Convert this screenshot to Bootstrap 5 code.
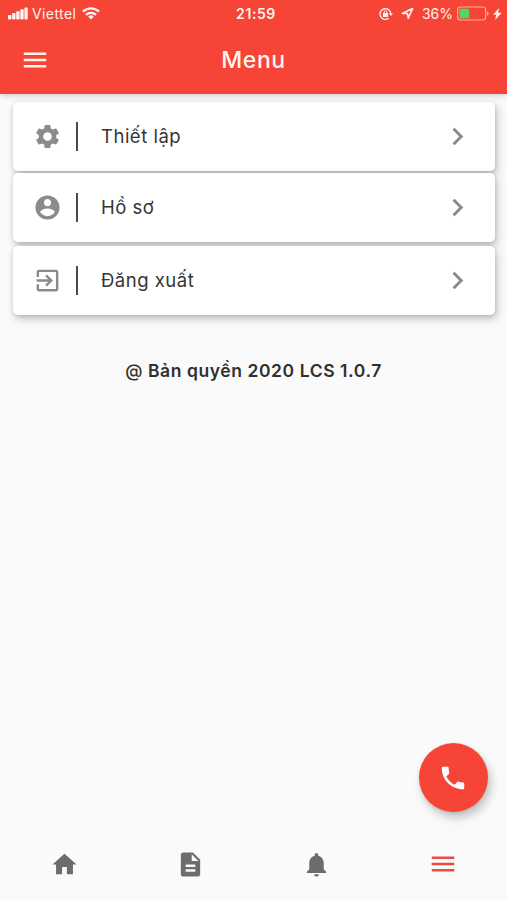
<!DOCTYPE html>
<html lang="vi">
<head>
<meta charset="utf-8">
<meta name="viewport" content="width=device-width, initial-scale=1">
<title>Menu</title>
<link href="https://cdn.jsdelivr.net/npm/bootstrap@5.3.0/dist/css/bootstrap.min.css" rel="stylesheet">
<style>
body{font-family:Inter,"Liberation Sans",sans-serif;background:#fafafa;color:#303030;height:900px;overflow:hidden}
svg{display:block;flex:none}
.app-header{background:#f64436;height:94px;box-shadow:0 1px 6px rgba(0,0,0,.22);color:#fff3f0;z-index:2}
.status{height:27px;font-size:14px;line-height:27px;padding:0 5px 0 8px}
.status>div{flex:1 1 0}
.carrier{letter-spacing:.4px;margin-left:4px;margin-right:6px}
.clock{font-weight:600;letter-spacing:.6px;padding-left:2px}
.toolbar{height:66px;padding:0 20px}
.toolbar>div{flex:1 1 0}
.title{font-size:23px;font-weight:500;letter-spacing:.6px;line-height:30px}
.menu-list{padding:8px 12px 0 13px}
.menu-item{height:69px;border-radius:5px;background:#fff;padding:0 20px 0 19.5px;box-shadow:2px 4px 8px rgba(0,0,0,.22),0 1px 4px rgba(0,0,0,.12);color:#353535;font-size:18.5px;letter-spacing:.5px;margin-bottom:2px}
.menu-item+.menu-item{margin-bottom:4px}
.menu-item svg{fill:#8b8b8b}
.menu-item .label{padding-top:1px}
.divider{width:1.5px;height:29px;background:#4a4a4a;margin:0 23.5px 0 14.5px}
.copyright{font-size:17.5px;font-weight:600;letter-spacing:.58px;margin-top:38.5px}
.copyright .at{font-weight:500}
.fab{width:69px;height:69px;background:#f64436;box-shadow:3px 6px 10px rgba(0,0,0,.22),0 1px 3px rgba(0,0,0,.1);margin:0 19.5px 17px 0}
.tabs{height:71px;background:#fafafa;box-shadow:0 0 4px rgba(0,0,0,.03);padding:0 0 1px 1px}
.tabs svg{fill:#6c6c6c}
.tabs .current svg{fill:#e84c40}
</style>
</head>
<body class="d-flex flex-column">
<header class="app-header position-relative flex-shrink-0">
  <div class="status d-flex align-items-center">
    <div class="d-flex align-items-center">
      <svg width="20" height="13" viewBox="0 0 20 13" fill="#fff3f0"><rect x="0" y="8" width="3.4" height="4.6" rx="1"/><rect x="4.1" y="6" width="3.4" height="6.6" rx="1"/><rect x="8.2" y="4.2" width="3.4" height="8.4" rx="1"/><rect x="12.3" y="2.2" width="3.4" height="10.4" rx="1"/><rect x="16.4" y="0.4" width="3.4" height="12.2" rx="1"/></svg>
      <span class="carrier">Viettel</span>
      <svg width="18" height="13" viewBox="0 0 18 13" fill="none" stroke="#fff3f0" stroke-width="2.3"><path d="M1 4.7a11.5 11.5 0 0 1 16 0M4 7.9a7.2 7.2 0 0 1 10 0"/><path d="M9 12.5 6.2 9.7a4 4 0 0 1 5.6 0z" fill="#fff3f0" stroke="none"/></svg>
    </div>
    <div class="clock text-center">21:59</div>
    <div class="d-flex align-items-center justify-content-end">
      <svg width="14" height="14" viewBox="0 0 14 14" fill="none" stroke="#fff3f0" stroke-width="1.3"><path d="M9.7 11.3A5.4 5.4 0 1 1 11.8 7"/><path d="M9.9 6.2h4l-2 2.8z" fill="#fff3f0" stroke="none"/><rect x="3.9" y="6" width="5.2" height="3.9" rx=".4" fill="#fff3f0" stroke="none"/><path d="M5.1 6.4V5a1.4 1.4 0 0 1 2.8 0v1.4" stroke-width="1"/></svg>
      <svg class="ms-2" width="13" height="13" viewBox="0 0 13 13" fill="none" stroke="#fff3f0" stroke-width="1.6" stroke-linejoin="round"><path d="M1.3 6.5 11.6 1.5 7.3 11.3 6.5 6.5z"/></svg>
      <span class="ms-2 me-1">36%</span>
      <svg width="32" height="15" viewBox="0 0 32 15"><rect x=".6" y="1" width="28" height="13" rx="3" fill="none" stroke="#ffaaa0" stroke-width="1.1"/><rect x="2.4" y="2.8" width="9.8" height="9.4" rx="1" fill="#4cd964"/><path d="M30 5.2q1.6.5 1.6 2.3T30 9.8z" fill="#ffaaa0"/></svg>
      <svg class="ms-1" width="9" height="12" viewBox="0 0 9 12" fill="#fff3f0"><path d="M6 0 .2 6.8h3L2.2 12 8.6 4.7H5.2z"/></svg>
    </div>
  </div>
  <div class="toolbar d-flex align-items-center">
    <div><svg width="30" height="30" viewBox="0 0 24 24" fill="#fff3f0"><path d="M3 18h18v-2H3v2zm0-5h18v-2H3v2zm0-7v2h18V6H3z"/></svg></div>
    <h1 class="title m-0 text-center">Menu</h1>
    <div></div>
  </div>
</header>

<main class="flex-grow-1 d-flex flex-column">
  <div class="menu-list">
    <div class="menu-item d-flex align-items-center">
      <svg width="29" height="29" viewBox="0 0 24 24"><path d="M19.14 12.94c.04-.3.06-.61.06-.94 0-.32-.02-.64-.07-.94l2.03-1.58a.49.49 0 0 0 .12-.61l-1.92-3.32a.488.488 0 0 0-.59-.22l-2.39.96c-.5-.38-1.03-.7-1.62-.94l-.36-2.54a.484.484 0 0 0-.48-.41h-3.84c-.24 0-.43.17-.47.41l-.36 2.54c-.59.24-1.13.57-1.62.94l-2.39-.96c-.22-.08-.47 0-.59.22L2.74 8.87c-.12.21-.08.47.12.61l2.03 1.58c-.05.3-.09.63-.09.94s.02.64.07.94l-2.03 1.58a.49.49 0 0 0-.12.61l1.92 3.32c.12.22.37.29.59.22l2.39-.96c.5.38 1.03.7 1.62.94l.36 2.54c.05.24.24.41.48.41h3.84c.24 0 .44-.17.47-.41l.36-2.54c.59-.24 1.13-.56 1.62-.94l2.39.96c.22.08.47 0 .59-.22l1.92-3.32c.12-.22.07-.47-.12-.61l-2.01-1.58zM12 15.6A3.6 3.6 0 1 1 12 8.4a3.6 3.6 0 0 1 0 7.2z"/></svg>
      <span class="divider"></span><span class="label">Thiết lập</span>
      <svg class="ms-auto" width="35" height="35" viewBox="0 0 24 24"><path d="M10 6 8.59 7.41 13.17 12l-4.58 4.59L10 18l6-6z"/></svg>
    </div>
    <div class="menu-item d-flex align-items-center">
      <svg width="29" height="29" viewBox="0 0 24 24"><path d="M12 2C6.48 2 2 6.48 2 12s4.48 10 10 10 10-4.48 10-10S17.52 2 12 2zm0 3c1.66 0 3 1.34 3 3s-1.34 3-3 3-3-1.34-3-3 1.34-3 3-3zm0 14.2c-2.5 0-4.71-1.28-6-3.22.03-1.99 4-3.08 6-3.08 1.99 0 5.97 1.09 6 3.08-1.29 1.94-3.5 3.22-6 3.22z"/></svg>
      <span class="divider"></span><span class="label">Hồ sơ</span>
      <svg class="ms-auto" width="35" height="35" viewBox="0 0 24 24"><path d="M10 6 8.59 7.41 13.17 12l-4.58 4.59L10 18l6-6z"/></svg>
    </div>
    <div class="menu-item d-flex align-items-center">
      <svg width="29" height="29" viewBox="0 0 24 24"><path d="M10.09 15.59 11.5 17l5-5-5-5-1.41 1.41L12.67 11H3v2h9.67l-2.58 2.59zM19 3H5a2 2 0 0 0-2 2v4h2V5h14v14H5v-4H3v4a2 2 0 0 0 2 2h14c1.1 0 2-.9 2-2V5c0-1.1-.9-2-2-2z"/></svg>
      <span class="divider"></span><span class="label">Đăng xuất</span>
      <svg class="ms-auto" width="35" height="35" viewBox="0 0 24 24"><path d="M10 6 8.59 7.41 13.17 12l-4.58 4.59L10 18l6-6z"/></svg>
    </div>
  </div>
  <p class="copyright text-center mb-0"><span class="at">@</span> Bản quyền 2020 LCS 1.0.7</p>
  <a href="#" class="fab rounded-circle d-flex align-items-center justify-content-center mt-auto ms-auto" aria-label="Gọi">
    <svg width="30" height="30" viewBox="0 0 24 24" fill="#fff"><path d="M6.62 10.79c1.44 2.83 3.76 5.14 6.59 6.59l2.2-2.2c.27-.27.67-.36 1.02-.24 1.12.37 2.33.57 3.57.57.55 0 1 .45 1 1V20c0 .55-.45 1-1 1-9.39 0-17-7.61-17-17 0-.55.45-1 1-1h3.5c.55 0 1 .45 1 1 0 1.25.2 2.45.57 3.57.11.35.03.74-.25 1.02l-2.2 2.2z"/></svg>
  </a>
</main>

<nav class="tabs d-flex align-items-center flex-shrink-0">
  <a href="#" class="flex-fill d-flex justify-content-center" aria-label="Trang chủ"><svg width="29" height="29" viewBox="0 0 24 24"><path d="M10 20v-6h4v6h5v-8h3L12 3 2 12h3v8z"/></svg></a>
  <a href="#" class="flex-fill d-flex justify-content-center" aria-label="Tài liệu"><svg width="29" height="29" viewBox="0 0 24 24"><path d="M14 2H6c-1.1 0-1.99.9-1.99 2L4 20c0 1.1.89 2 1.99 2H18c1.1 0 2-.9 2-2V8l-6-6zm2 16H8v-2h8v2zm0-4H8v-2h8v2zm-3-5V3.5L18.5 9H13z"/></svg></a>
  <a href="#" class="flex-fill d-flex justify-content-center" aria-label="Thông báo"><svg width="29" height="29" viewBox="0 0 24 24"><path d="M12 22c1.1 0 2-.9 2-2h-4a2 2 0 0 0 2 2zm6-6v-5c0-3.07-1.64-5.64-4.5-6.32V4c0-.83-.67-1.5-1.5-1.5s-1.5.67-1.5 1.5v.68C7.63 5.36 6 7.92 6 11v5l-2 2v1h16v-1l-2-2z"/></svg></a>
  <a href="#" class="current flex-fill d-flex justify-content-center" aria-label="Menu"><svg width="30" height="30" viewBox="0 0 24 24"><path d="M3 18h18v-2H3v2zm0-5h18v-2H3v2zm0-7v2h18V6H3z"/></svg></a>
</nav>
<script src="https://cdn.jsdelivr.net/npm/bootstrap@5.3.0/dist/js/bootstrap.bundle.min.js"></script>
</body>
</html>
